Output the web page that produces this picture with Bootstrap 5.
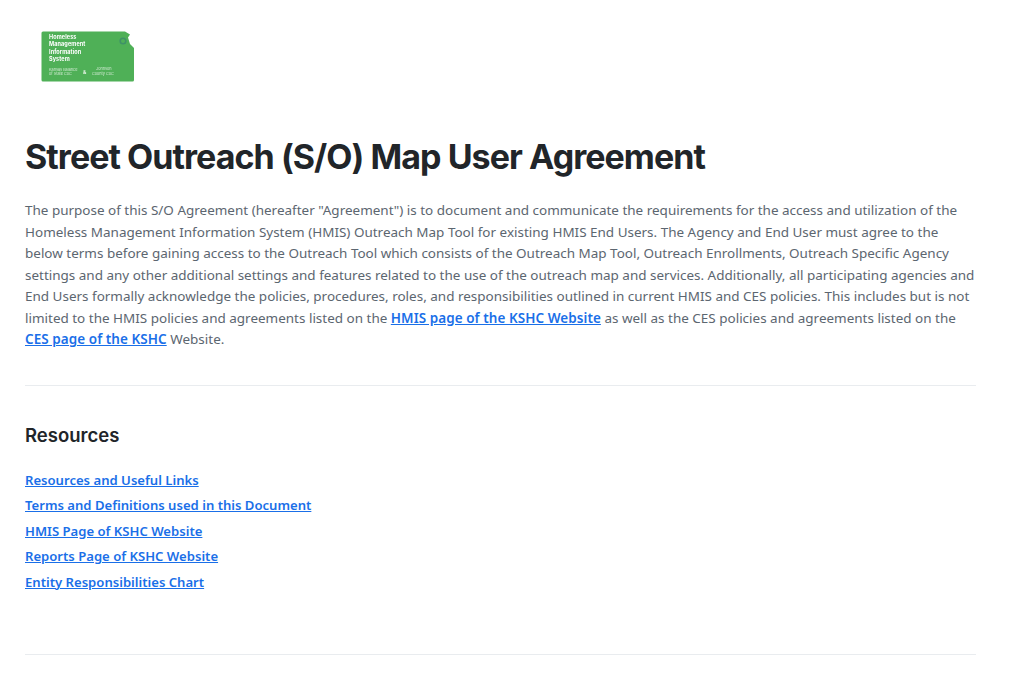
<!doctype html>
<html lang="en"><head><meta charset="utf-8"><title>Agreement</title>
<link href="https://cdn.jsdelivr.net/npm/bootstrap@5.3.0/dist/css/bootstrap.min.css" rel="stylesheet">
<style>
html,body{height:685px;overflow:hidden}
body{font-family:"Noto Sans",sans-serif;background:#fff}
.page-wrap{padding:0 45px 0 25px}
.logo-box{padding:30px 0 0 15px;height:100px}
.logo-box svg{display:block;filter:blur(.3px)}
.logo-box text{font-family:Inter,sans-serif}
.logo-head{letter-spacing:.1px}
.main-title{font-family:Inter,sans-serif;font-weight:700;font-size:34px;line-height:41px;color:#212529;margin:36px 0 0;letter-spacing:-.95px}
.intro-text{font-size:13.47px;line-height:21.5px;color:#5c6670;margin:23px 0 0}
.intro-text a{font-weight:600;letter-spacing:.07px;color:#1a6fe8}
.res-list a{font-weight:600;color:#1a6fe8}
.rule-line{border:0;border-top:1px solid #e9ecef;opacity:1;margin:0}
.res-title{font-family:Inter,sans-serif;font-weight:600;font-size:18.5px;line-height:22px;color:#212529;margin:38px 0 0}
.res-list{font-size:13.1px;line-height:25.5px;margin:22px 0 0}
.rule-a{margin-top:34px}
.rule-c{margin-top:59px}
</style></head><body>
<div class="page-wrap">
<div class="logo-box">
<svg width="96" height="54" viewBox="0 0 96 54" role="img" aria-label="Homeless Management Information System logo">
<path d="M3 1.500H85L90 4.500L88 7.500L90 14L94 18V50a1.500 1.500 0 0 1-1.500 1.500H3a1.500 1.500 0 0 1-1.500-1.500V3A1.500 1.500 0 0 1 3 1.500Z" fill="#4fb057"/>
<circle cx="83" cy="11" r="2.800" fill="none" stroke="#3f9268" stroke-width="1.600"/>
<text class="logo-head" x="9" y="8.500" font-size="5.500" font-weight="700" fill="#fff">Homeless</text>
<text class="logo-head" x="9" y="16" font-size="5.500" font-weight="700" fill="#fff">Management</text>
<text class="logo-head" x="9" y="23.500" font-size="5.500" font-weight="700" fill="#fff">Information</text>
<text class="logo-head" x="9" y="30.500" font-size="5.500" font-weight="700" fill="#fff">System</text>
<text x="9" y="40.500" font-size="3.800" fill="#cfe9d0">Kansas Balance</text>
<text x="9" y="45" font-size="3.800" fill="#cfe9d0">of State CoC</text>
<text x="43" y="43.500" font-size="5" font-weight="700" fill="#e5f3e5">&amp;</text>
<text x="56" y="40" font-size="3.800" fill="#cfe9d0">Johnson</text>
<text x="52" y="45" font-size="3.800" fill="#cfe9d0">County CoC</text>
</svg>
</div>
<h1 class="main-title">Street Outreach (S/O) Map User Agreement</h1>
<p class="intro-text">The purpose of this S/O Agreement (hereafter "Agreement") is to document and communicate the requirements for the access and utilization of the Homeless Management Information System (HMIS) Outreach Map Tool for existing HMIS End Users. The Agency and End User must agree to the below terms before gaining access to the Outreach Tool which consists of the Outreach Map Tool, Outreach Enrollments, Outreach Specific Agency settings and any other additional settings and features related to the use of the outreach map and services. Additionally, all participating agencies and End Users formally acknowledge the policies, procedures, roles, and responsibilities outlined in current HMIS and CES policies. This includes but is not limited to the HMIS policies and agreements listed on the <a href="#">HMIS page of the KSHC Website</a> as well as the CES policies and agreements listed on the <a href="#">CES page of the KSHC</a> Website.</p>
<hr class="rule-line rule-a">
<h2 class="res-title">Resources</h2>
<div class="res-list d-flex flex-column align-items-start">
<a href="#">Resources and Useful Links</a>
<a href="#">Terms and Definitions used in this Document</a>
<a href="#">HMIS Page of KSHC Website</a>
<a href="#">Reports Page of KSHC Website</a>
<a href="#">Entity Responsibilities Chart</a>
</div>
<hr class="rule-line rule-c">
</div>
<script src="https://cdn.jsdelivr.net/npm/bootstrap@5.3.0/dist/js/bootstrap.bundle.min.js"></script>
</body></html>
